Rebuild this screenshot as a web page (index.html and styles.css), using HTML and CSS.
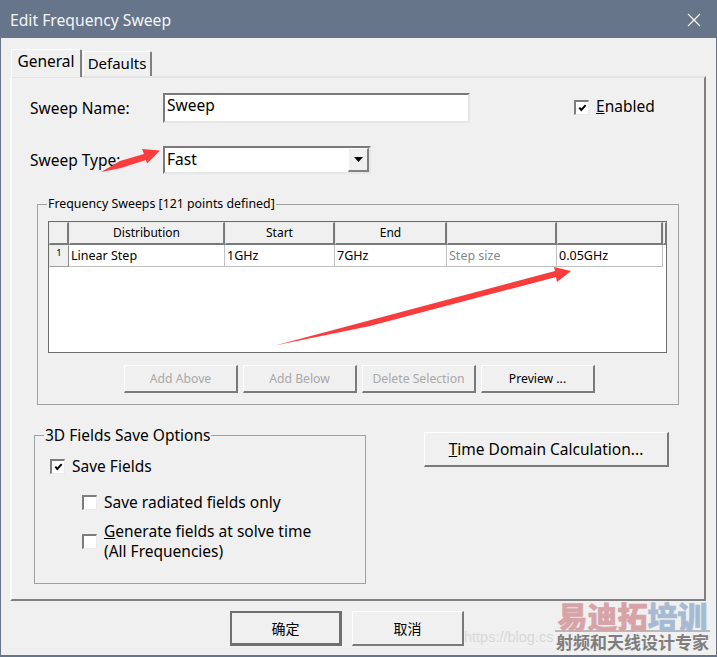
FILE: index.html
```html
<!DOCTYPE html>
<html lang="en">
<head>
<meta charset="utf-8">
<title>Edit Frequency Sweep</title>
<link rel="stylesheet" href="styles.css">
</head>
<body>
<div class="window">
  <header class="titlebar">
    <span class="title">Edit Frequency Sweep</span>
    <svg class="close" width="14" height="14" viewBox="0 0 14 14"><path d="M1 1L13 13M13 1L1 13" stroke="#fff" stroke-width="1.1" fill="none"/></svg>
  </header>
  <main class="client">
    <div class="tabs">
      <div class="tab active">General</div>
      <div class="tab">Defaults</div>
    </div>
    <section class="panel">
      <div class="name-row">
        <label class="field-label">Sweep Name:</label>
        <div class="sunken name-input">Sweep</div>
        <div class="check-item enabled"><span class="check on"><svg width="9" height="8" viewBox="0 0 11 10"><path d="M1.500 4.500L4 7.500L9.500 1.500" stroke="#000" stroke-width="2.400" fill="none"/></svg></span><span class="enabled-text"><u>E</u>nabled</span></div>
      </div>
      <div class="type-row">
        <label class="field-label">Sweep Type:</label>
        <div class="sunken type-select">
          <span>Fast</span>
          <span class="drop"><svg width="9" height="5" viewBox="0 0 9 5"><path d="M0 0H9L4.500 5Z" fill="#000"/></svg></span>
        </div>
      </div>
      <fieldset class="group sweeps">
        <legend>Frequency Sweeps [121 points defined]</legend>
        <div class="grid">
          <div class="grid-row head">
            <div class="hcell c0"></div>
            <div class="hcell c1">Distribution</div>
            <div class="hcell c2">Start</div>
            <div class="hcell c3">End</div>
            <div class="hcell c4"></div>
            <div class="hcell c5"></div>
            <div class="hcell c6"></div>
          </div>
          <div class="grid-row body">
            <div class="rowhead c0">1</div>
            <div class="cell c1">Linear Step</div>
            <div class="cell c2">1GHz</div>
            <div class="cell c3">7GHz</div>
            <div class="cell c4 muted">Step size</div>
            <div class="cell c5">0.05GHz</div>
          </div>
        </div>
        <div class="grid-actions">
          <button class="btn small disabled">Add Above</button>
          <button class="btn small disabled">Add Below</button>
          <button class="btn small disabled">Delete Selection</button>
          <button class="btn small">Preview ...</button>
        </div>
      </fieldset>
      <div class="lower">
        <fieldset class="group fields">
          <legend>3D Fields Save Options</legend>
          <div class="check-item save"><span class="check on"><svg width="9" height="8" viewBox="0 0 11 10"><path d="M1.500 4.500L4 7.500L9.500 1.500" stroke="#000" stroke-width="2.400" fill="none"/></svg></span><span>Save Fields</span></div>
          <div class="check-item radiated"><span class="check"></span><span>Save radiated fields only</span></div>
          <div class="check-item generate"><span class="check"></span><span><u>G</u>enerate fields at solve time<br>(All Frequencies)</span></div>
        </fieldset>
        <button class="btn time"><span><u>T</u>ime Domain Calculation...</span></button>
      </div>
    </section>
    <footer class="footer">
      <button class="btn dialog default">确定</button>
      <button class="btn dialog">取消</button>
    </footer>
  </main>

  <svg class="arrow-layer" width="717" height="657" viewBox="0 0 717 657">
    <path d="M101 172L120 161L144 154L142 149L160 150.500L147 163.500L146 160L120 168.300Z" fill="#fb3c3c"/>
    <path d="M275 345.500L555 271L554 267L571 271L557 282L556 277L370 326Z" fill="#fb3c3c"/>
  </svg>
  <div class="url-mark">https://blog.cs</div>
  <div class="watermark">
    <div class="wm-big"><span class="wm-red">易迪拓</span><span class="wm-blue">培训</span></div>
    <div class="wm-small">射频和天线设计专家</div>
  </div>
</div>
</body>
</html>
```

FILE: styles.css
```css
* { box-sizing: border-box; }
html, body { margin: 0; padding: 0; }
body { width: 717px; height: 657px; overflow: hidden; background: #f0f0f0; }

.window {
  position: relative;
  width: 717px;
  height: 657px;
  display: flex;
  flex-direction: column;
  background: #f0f0f0;
  border: 1px solid #66758a;
  border-bottom-width: 2px;
  font-family: "Noto Sans", "Noto Sans CJK SC", sans-serif;
  font-size: 15.500px;
  color: #000;
}

.titlebar {
  height: 37px;
  flex: none;
  background: #66758a;
  display: flex;
  align-items: center;
  justify-content: space-between;
  padding: 0 15px 0 9px;
}
.title { color: #f2f5f7; font-size: 15.700px; }
.close { display: block; }

.client { flex: 1; display: flex; flex-direction: column; padding: 10px 9px 0 9px; }

.tabs { display: flex; height: 28px; align-items: flex-end; padding-left: 1px; position: relative; z-index: 1; }
.tab {
  height: 25px;
  width: 69px;
  margin-left: 1px;
  text-align: center;
  font-size: 15px;
  line-height: 23px;
  border: 1px solid #fff;
  border-right: 2px solid #808080;
  border-bottom: 0;
  border-radius: 2px 2px 0 0;
  box-shadow: inset 0 0 0 1px #f0f0f0;
}
.tab.active { height: 28px; width: 71px; margin-left: 0; font-size: 15.500px; line-height: 23px; background: #f0f0f0; margin-bottom: -1px; }

.panel {
  width: 696px;
  height: 525px;
  flex: none;
  border: 2px solid #808080;
  border-top-color: #e4e4e4;
  border-left-color: #fff;
  padding: 15px 0 0 18px;
}

.name-row, .type-row { display: flex; }
.name-row { height: 30px; align-items: center; }
.type-row { height: 28px; margin-top: 23px; align-items: center; }
.field-label { width: 133px; flex: none; line-height: 20px; padding-bottom: 1px; }

.sunken {
  background: #fff;
  border: 2px solid #e6e6e6;
  border-top-color: #7a7a7a;
  border-left-color: #7a7a7a;
}
.name-input { width: 307px; height: 30px; padding-left: 2px; line-height: 21px; }
.type-select {
  width: 208px;
  height: 28px;
  padding-left: 2px;
  display: flex;
  justify-content: space-between;
  line-height: 22px;
}
.drop {
  width: 21px;
  height: 24px;
  background: #f0f0f0;
  border: 1px solid #fff;
  border-right: 2px solid #808080;
  border-bottom: 2px solid #808080;
  display: flex;
  align-items: center;
  justify-content: center;
}

.check-item { display: flex; align-items: center; gap: 7px; }
.check {
  width: 15px;
  height: 15px;
  flex: none;
  background: #fff;
  border: 1px solid #eaeaea;
  border-top: 2px solid #7d7d7d;
  border-left: 2px solid #7d7d7d;
  display: flex;
  align-items: center;
  justify-content: center;
}
.enabled { margin-left: 104px; margin-top: -1px; }
.enabled-text { margin-top: -3px; }

.group { margin: 0; padding: 0; min-width: 0; border: 1px solid #a0a0a0; }
.group legend { padding: 0 1px; }

.sweeps {
  width: 642px;
  height: 210px;
  margin: 21px 0 0 7px;
  padding: 0 0 0 10px;
}
.sweeps legend { font-size: 12.350px; line-height: 18px; margin-left: -1px; }

.grid {
  width: 619px;
  height: 132px;
  margin-top: 8px;
  background: #fff;
  border: 1px solid #6b6b6b;
}
.grid-row { display: flex; }
.grid-row.head { height: 23px; }
.grid-row.body { height: 22px; }
.c0 { width: 20px; }
.c1 { width: 156px; }
.c2 { width: 110px; }
.c3 { width: 112px; }
.c4 { width: 110px; }
.c5 { width: 106px; }
.c6 { width: 4px; }
.hcell, .rowhead {
  background: #f0f0f0;
  border: 1px solid #e8e8e8;
  border-right: 2px solid #7a7a7a;
  border-bottom: 2px solid #7a7a7a;
  font-size: 12px;
  line-height: 19px;
  text-align: center;
  flex: none;
}
.rowhead {
  border-right: 1px solid #8a8a8a;
  border-bottom: 1px solid #a0a0a0;
  font-size: 9.500px;
  line-height: 14px;
}
.cell {
  flex: none;
  border-right: 1px solid #c0c0c0;
  border-bottom: 1px solid #c0c0c0;
  font-size: 12.500px;
  line-height: 22px;
  padding-left: 2px;
  white-space: nowrap;
}
.muted { color: #808a8e; }

.btn {
  font: inherit;
  color: inherit;
  padding: 0;
  background: #f0f0f0;
  border: 1px solid #fff;
  border-right: 2px solid #7a7a7a;
  border-bottom: 2px solid #7a7a7a;
}
.grid-actions { display: flex; margin: 12px 0 0 76px; gap: 5px; }
.btn.small { width: 114px; height: 28px; font-size: 12.200px; }
.btn.disabled { color: #a8a8a8; }

.lower { display: flex; align-items: flex-start; margin-top: 21px; }
.fields {
  position: relative;
  width: 332px;
  height: 158px;
  margin-left: 4px;
}
.fields legend { margin-left: 9px; line-height: 18px; }
.fields .check-item { position: absolute; }
.save { left: 15px; top: 11px; }
.radiated { left: 47px; top: 47px; }
.generate { left: 47px; top: 77px; line-height: 20px; }
.btn.time { width: 245px; height: 35px; margin: 6px 0 0 58px; }

.footer { display: flex; gap: 10px; margin: 10px 0 0 220px; }
.btn.dialog { width: 112px; height: 35px; font-size: 14px; font-family: "Noto Sans CJK SC", sans-serif; }
.btn.dialog.default { border: 2px solid #6f6f6f; border-bottom-width: 3px; border-right-width: 3px; }

.arrow-layer { position: absolute; left: -1px; top: -1px; pointer-events: none; }

.url-mark {
  position: absolute;
  left: 463px;
  top: 628px;
  white-space: nowrap;
  font-family: "Liberation Sans", sans-serif;
  font-size: 14.500px;
  color: #d8d8d8;
}
.watermark {
  position: absolute;
  left: 554px;
  top: 598px;
  width: 155px;
  font-family: "Noto Sans CJK SC", sans-serif;
  text-align: center;
}
.wm-big { height: 33px; font-size: 30px; font-weight: 900; line-height: 33px; border-bottom: 2px solid #b9b9b9; white-space: nowrap; -webkit-text-stroke: 0.6px currentColor; }
.wm-red { color: #d6a3a7; }
.wm-blue { color: #a6bbd3; }
.wm-small { font-size: 17px; font-weight: 700; line-height: 20px; color: #7e7e7e; white-space: nowrap; }
```
